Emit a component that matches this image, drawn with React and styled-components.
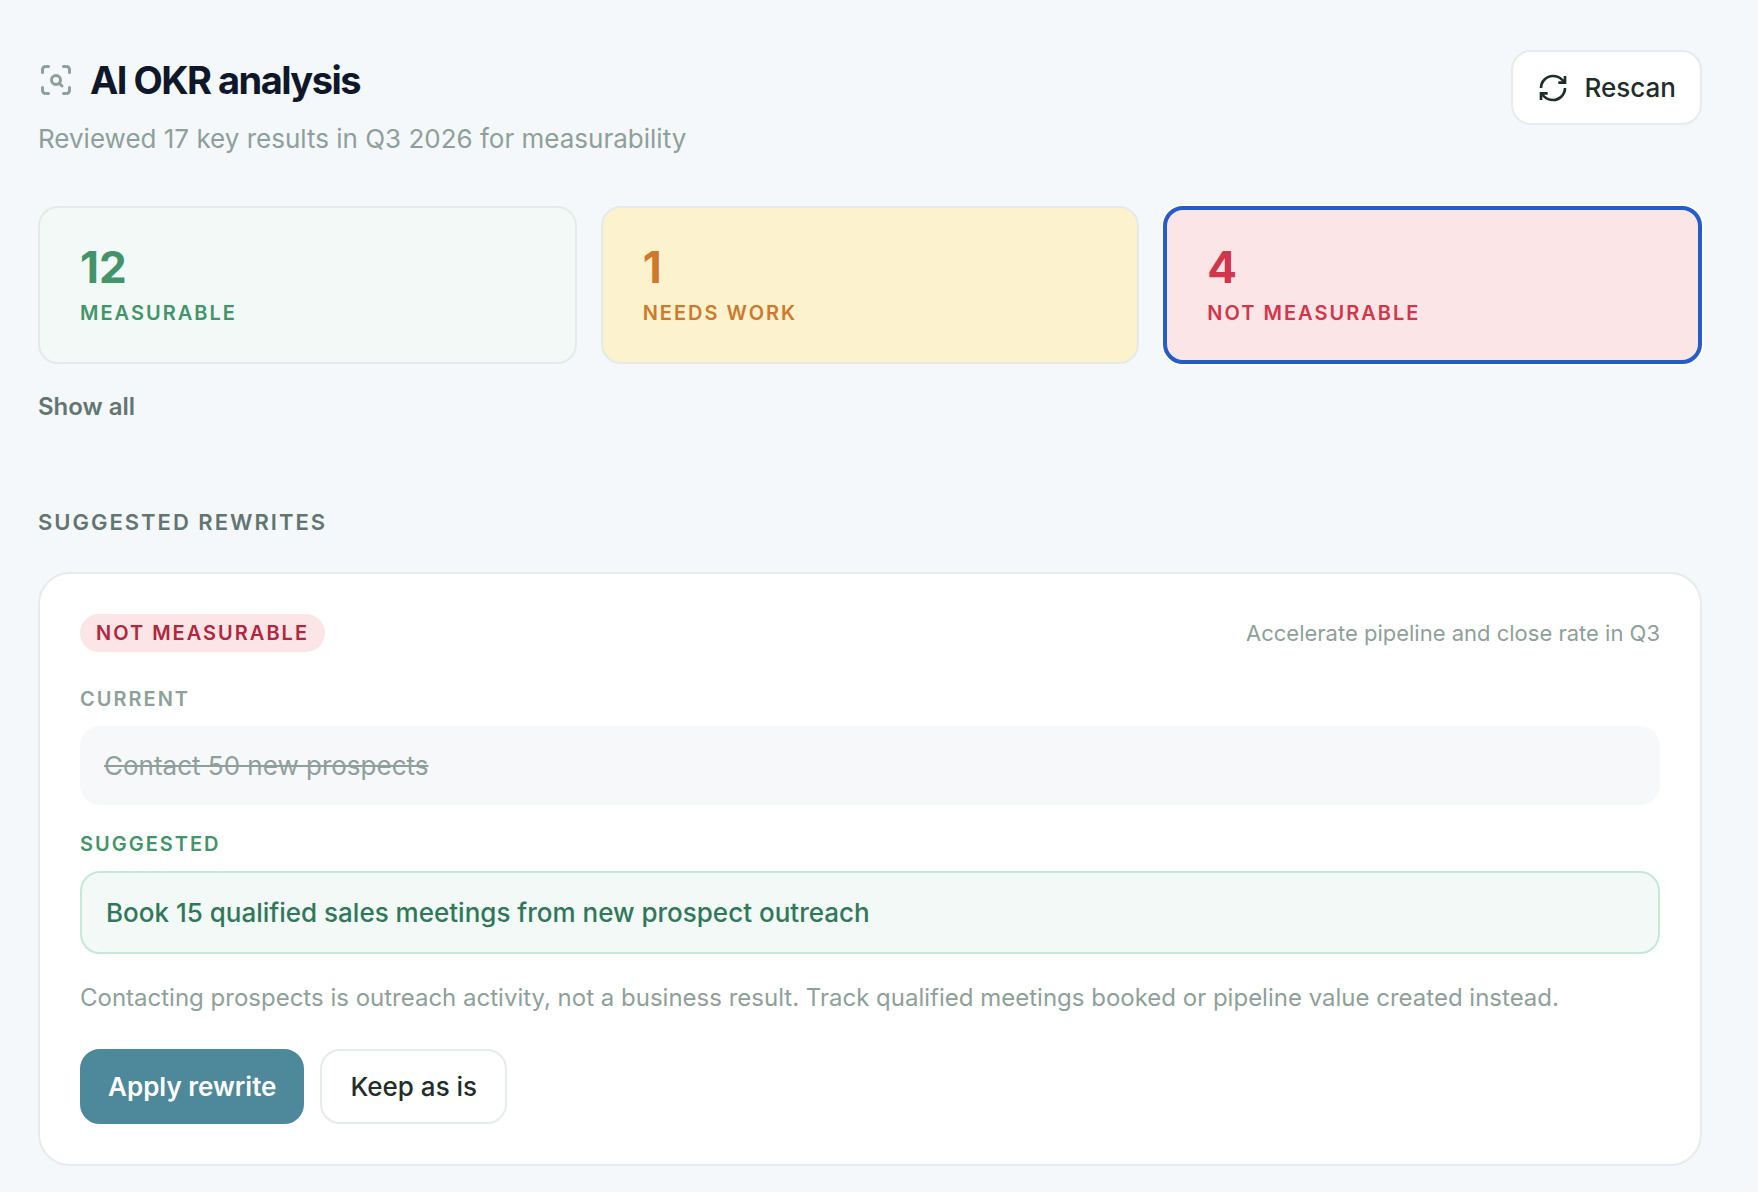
import React from 'react';
import styled, { createGlobalStyle } from 'styled-components';
import { ScanSearch } from 'lucide-react';

const GlobalStyle = createGlobalStyle`
  *,
  *::before,
  *::after {
    box-sizing: border-box;
  }

  body {
    margin: 0;
    min-height: 100vh;
    background-color: #f4f8fa;
    color: #1f2d2b;
    font-family: Inter, 'Liberation Sans', sans-serif;
    -webkit-font-smoothing: antialiased;
  }

  button {
    font-family: inherit;
    cursor: pointer;
  }
`;

const StyledPage = styled.main`
  padding: 50px 56px 26px 38px;
`;

const StyledHeader = styled.header`
  display: flex;
  align-items: flex-start;
  justify-content: space-between;
  gap: 24px;
`;

const StyledTitle = styled.div`
  display: flex;
  align-items: center;
  gap: 16px;
  padding-top: 5px;
  color: #8f9f9a;

  h1 {
    margin: 0;
    color: #0f172a;
    font-size: 38px;
    font-weight: 700;
    line-height: 50px;
    letter-spacing: -0.04em;
  }
`;

const StyledSubtitle = styled.p`
  margin: 15px 0 0;
  color: #8f9f9a;
  font-size: 26px;
  line-height: 38px;
`;

const StyledButton = styled.button`
  display: inline-flex;
  align-items: center;
  justify-content: center;
  gap: 16px;
  height: 75px;
  padding: 0 ${({ $padding }) => $padding || '24px'};
  border: 2px solid ${({ $primary }) => ($primary ? '#4e889b' : '#e7ebea')};
  border-radius: 20px;
  background-color: ${({ $primary }) => ($primary ? '#4e889b' : '#fff')};
  color: ${({ $primary }) => ($primary ? '#fff' : '#1f2d2b')};
  font-size: 26px;
  font-weight: ${({ $primary }) => ($primary ? 600 : 500)};
`;

const StyledStats = styled.div`
  display: grid;
  grid-template-columns: repeat(3, 1fr);
  gap: 24px;
  margin-top: 48px;
`;

const StyledStat = styled.button`
  height: 158px;
  padding: 0 40px;
  border: ${({ $selected }) => ($selected ? '4px solid #255cc8' : '2px solid #e5eae9')};
  border-radius: 20px;
  background-color: ${({ $background }) => $background};
  box-shadow: ${({ $selected }) => ($selected ? '0 0 0 2px #fff' : 'none')};
  color: ${({ $color }) => $color};
  text-align: left;

  strong {
    display: block;
    font-size: 44px;
    font-weight: 700;
    line-height: 50px;
  }

  span {
    display: block;
    margin-top: 6px;
    font-size: 20px;
    font-weight: 600;
    line-height: 30px;
    letter-spacing: 0.1em;
    text-transform: uppercase;
  }
`;

const StyledShowAll = styled.button`
  display: block;
  margin-top: 24px;
  padding: 0;
  border: 0;
  background: none;
  color: #637571;
  font-size: 24px;
  font-weight: 600;
  line-height: 38px;
`;

const StyledSectionHeading = styled.h2`
  margin: 80px 0 34px;
  color: #637571;
  font-size: 22px;
  font-weight: 600;
  line-height: 32px;
  letter-spacing: 2px;
  text-transform: uppercase;
`;

const StyledCard = styled.article`
  padding: 40px;
  border: 2px solid #e7ebea;
  border-radius: 32px;
  background-color: #fff;
`;

const StyledCardTop = styled.div`
  display: flex;
  align-items: center;
  justify-content: space-between;
  gap: 24px;
  color: #8f9f9a;
  font-size: 22px;
`;

const StyledBadge = styled.span`
  padding: 4px 16px;
  border-radius: 19px;
  background-color: #fbe5e6;
  color: #b0283f;
  font-size: 20px;
  font-weight: 600;
  line-height: 30px;
  letter-spacing: 0.1em;
  text-transform: uppercase;
`;

const StyledLabel = styled.h3`
  margin: ${({ $top }) => $top} 0 12px;
  color: ${({ $color }) => $color};
  font-size: 20px;
  font-weight: 600;
  line-height: 30px;
  letter-spacing: 0.1em;
  text-transform: uppercase;
`;

const StyledCurrent = styled.p`
  margin: 0;
  padding: 20px 24px;
  border-radius: 20px;
  background-color: #f7f8fa;
  color: #8f9f9a;
  font-size: 26px;
  line-height: 39px;
  text-decoration: line-through;
`;

const StyledSuggested = styled.p`
  margin: 0;
  padding: 20px 24px;
  border: 2px solid #c7e8d9;
  border-radius: 20px;
  background-color: #f2f9f6;
  color: #31785b;
  font-size: 26px;
  font-weight: 500;
  line-height: 39px;
`;

const StyledReason = styled.p`
  margin: 24px 0 0;
  color: #8f9f9a;
  font-size: 24px;
  line-height: 39px;
`;

const StyledActions = styled.div`
  display: flex;
  gap: 16px;
  margin-top: 32px;
`;

const RefreshIcon = () => (
  <svg
    width="32"
    height="32"
    viewBox="0 0 24 24"
    fill="none"
    stroke="currentColor"
    strokeWidth="2"
    aria-hidden="true"
  >
    <path d="M3 12a9 9 0 0 1 9-9 9.75 9.75 0 0 1 6.74 2.74L21 8" />
    <path d="M21 3v5h-5" />
    <path d="M21 12a9 9 0 0 1-9 9 9.75 9.75 0 0 1-6.74-2.74L3 16" />
    <path d="M8 16H3v5" />
  </svg>
);

const stats = [
  { label: 'Measurable', count: 12, color: '#43946b', background: '#f2f9f6' },
  { label: 'Needs work', count: 1, color: '#cc7a2e', background: '#fcf2cd' },
  { label: 'Not measurable', count: 4, color: '#d0364c', background: '#fbe5e6' },
];

const App = () => {
  const [selected, setSelected] = React.useState('Not measurable');

  return (
    <>
      <GlobalStyle />
      <StyledPage>
        <StyledHeader>
          <div>
            <StyledTitle>
              <ScanSearch size={36} aria-hidden="true" />
              <h1>AI OKR analysis</h1>
            </StyledTitle>
            <StyledSubtitle>Reviewed 17 key results in Q3 2026 for measurability</StyledSubtitle>
          </div>
          <StyledButton type="button">
            <RefreshIcon />
            Rescan
          </StyledButton>
        </StyledHeader>

        <StyledStats>
          {stats.map(({ label, count, color, background }) => (
            <StyledStat
              key={label}
              type="button"
              $color={color}
              $background={background}
              $selected={selected === label}
              aria-pressed={selected === label}
              onClick={() => setSelected(label)}>
              <strong>{count}</strong>
              <span>{label}</span>
            </StyledStat>
          ))}
        </StyledStats>
        <StyledShowAll type="button" onClick={() => setSelected(null)}>
          Show all
        </StyledShowAll>

        <StyledSectionHeading>Suggested rewrites</StyledSectionHeading>
        <StyledCard>
          <StyledCardTop>
            <StyledBadge>Not measurable</StyledBadge>
            <span>Accelerate pipeline and close rate in Q3</span>
          </StyledCardTop>

          <StyledLabel $top="32px" $color="#8f9f9a">
            Current
          </StyledLabel>
          <StyledCurrent>Contact 50 new prospects</StyledCurrent>

          <StyledLabel $top="24px" $color="#43946b">
            Suggested
          </StyledLabel>
          <StyledSuggested>Book 15 qualified sales meetings from new prospect outreach</StyledSuggested>

          <StyledReason>
            Contacting prospects is outreach activity, not a business result. Track qualified
            meetings booked or pipeline value created instead.
          </StyledReason>

          <StyledActions>
            <StyledButton type="button" $primary $padding="26px">
              Apply rewrite
            </StyledButton>
            <StyledButton type="button" $padding="28px">
              Keep as is
            </StyledButton>
          </StyledActions>
        </StyledCard>
      </StyledPage>
    </>
  );
};

export default App;
